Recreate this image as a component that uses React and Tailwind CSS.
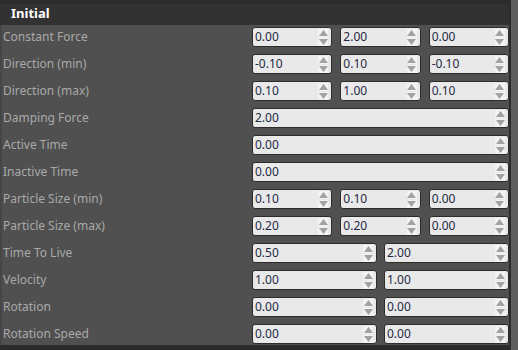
const rows = [
  { label: 'Constant Force', values: ['0.00', '2.00', '0.00'] },
  { label: 'Direction (min)', values: ['-0.10', '0.10', '-0.10'] },
  { label: 'Direction (max)', values: ['0.10', '1.00', '0.10'] },
  { label: 'Damping Force', values: ['2.00'] },
  { label: 'Active Time', values: ['0.00'] },
  { label: 'Inactive Time', values: ['0.00'] },
  { label: 'Particle Size (min)', values: ['0.10', '0.10', '0.00'] },
  { label: 'Particle Size (max)', values: ['0.20', '0.20', '0.00'] },
  { label: 'Time To Live', values: ['0.50', '2.00'] },
  { label: 'Velocity', values: ['1.00', '1.00'] },
  { label: 'Rotation', values: ['0.00', '0.00'] },
  { label: 'Rotation Speed', values: ['0.00', '0.00'] },
];

function Spinner() {
  return (
    <div className="flex flex-col gap-[1px] mr-[3px]">
      <div className="w-[10px] h-[8px] bg-[#f3f3f3] flex items-center justify-center">
        <svg width="9" height="6" viewBox="0 0 9 6">
          <path d="M4.5 0 L9 6 L0 6 Z" fill="#a2a2a2" />
        </svg>
      </div>
      <div className="w-[10px] h-[8px] bg-[#f3f3f3] flex items-center justify-center">
        <svg width="9" height="6" viewBox="0 0 9 6">
          <path d="M0 0 L9 0 L4.5 6 Z" fill="#a2a2a2" />
        </svg>
      </div>
    </div>
  );
}

function NumberBox({ value }) {
  return (
    <div className="flex-1 h-[20px] flex items-center justify-between bg-[#e9e9e9] border border-[#2c2c2c] rounded-[3px]">
      <span className="pl-[2px] text-[12px] leading-none text-[#1e2a44]">{value}</span>
      <Spinner />
    </div>
  );
}

export default function App() {
  return (
    <div
      className="w-[518px] h-[350px] bg-[#2b2b2b] flex overflow-hidden"
      style={{ fontFamily: '"Noto Sans", "Open Sans", sans-serif' }}
    >
      <div className="w-[509px] flex flex-col">
        {/* Section header */}
        <div className="h-[21px] mt-[4px] bg-[#323232] flex items-center pl-[11px] pb-[2px]">
          <span className="text-[13px] font-bold text-white">Initial</span>
        </div>

        {/* Property rows */}
        <div className="h-[320px] bg-[#505050] border-l-[2px] border-[#464646] overflow-hidden">
          {rows.map((row) => (
            <div key={row.label} className="h-[27px] flex items-start pt-[2px]">
              <div className="w-[250px] h-[20px] flex items-center pl-[1px] text-[12px] text-[#a9a9a9]">
                {row.label}
              </div>
              <div className={`flex-1 flex ${row.values.length === 2 ? 'gap-[7px]' : 'gap-[8px]'}`}>
                {row.values.map((v, i) => (
                  <NumberBox key={i} value={v} />
                ))}
              </div>
            </div>
          ))}
        </div>
      </div>

      {/* Scrollbar */}
      <div className="w-[7px] ml-[2px] bg-[#5f5f5f]" />
    </div>
  );
}
